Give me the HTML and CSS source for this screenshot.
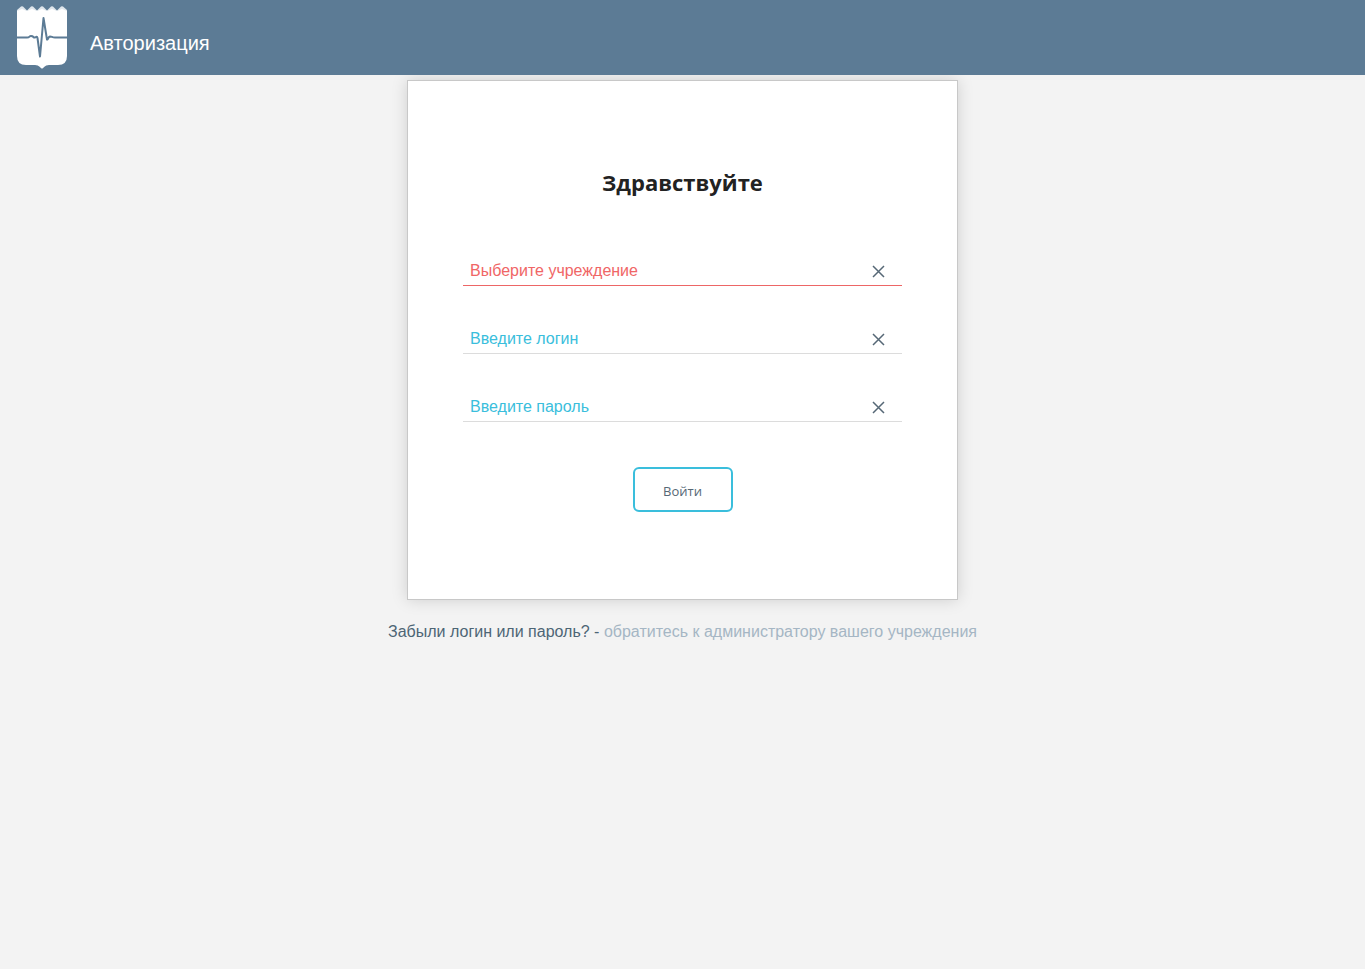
FILE: index.html
```html
<!DOCTYPE html>
<html lang="ru">
<head>
<meta charset="utf-8">
<meta name="viewport" content="width=device-width, initial-scale=1">
<title>Авторизация</title>
<link rel="stylesheet" href="styles.css">
</head>
<body>
<header class="topbar">
  <svg class="logo" width="52" height="65" viewBox="0 0 52 65" aria-hidden="true">
    <path fill="#dfe6ec" d="M1 7V5L5 1.500Q6 .8 7 1.500L11 5.500L15 1.500Q16 .8 17 1.500L21 5.500L25 1.500Q26 .8 27 1.500L31 5.500L35 1.500Q36 .8 37 1.500L41 5.500L45 1.500Q46 .8 47 1.500L51 5V7Z"/>
    <path fill="#fff" d="M1 6L6 4L11 6L16 4L21 6L26 4L31 6L36 4L41 6L46 4L51 6V51Q51 60 42 60H33Q30 60 28 62Q26 65 24 62Q22 60 19 60H10Q1 60 1 51Z"/>
    <path fill="none" stroke="#5c7b95" stroke-width="2" stroke-linejoin="round" d="M1 32.500H11C14 32.500 13 31 15 31C18 31 17 33 19 32.500C20 32 21 31 21.500 33L24 51.500L27.500 13L31 34.500C32 35 32 32 34 31.500C36 31.500 36 32.500 39 32.500H51"/>
  </svg>
  <span class="topbar-title">Авторизация</span>
</header>
<main class="page">
  <form class="card">
    <h1 class="greeting">Здравствуйте</h1>
    <div class="fields">
      <div class="field field-invalid">
        <input class="field-input" type="text" aria-label="Выберите учреждение" placeholder="Выберите учреждение">
        <button class="clear" type="button" aria-label="Очистить учреждение"><svg width="13" height="13" viewBox="0 0 13 13"><path d="M1 1L12 12M12 1L1 12"/></svg></button>
      </div>
      <div class="field">
        <input class="field-input" type="text" aria-label="Введите логин" placeholder="Введите логин">
        <button class="clear" type="button" aria-label="Очистить логин"><svg width="13" height="13" viewBox="0 0 13 13"><path d="M1 1L12 12M12 1L1 12"/></svg></button>
      </div>
      <div class="field">
        <input class="field-input" type="password" aria-label="Введите пароль" placeholder="Введите пароль">
        <button class="clear" type="button" aria-label="Очистить пароль"><svg width="13" height="13" viewBox="0 0 13 13"><path d="M1 1L12 12M12 1L1 12"/></svg></button>
      </div>
    </div>
    <button class="submit" type="submit">Войти</button>
  </form>
  <p class="hint">Забыли логин или пароль? - <span class="hint-muted">обратитесь к администратору вашего учреждения</span></p>
</main>
</body>
</html>
```
FILE: styles.css
```css
* {
  box-sizing: border-box;
}

body {
  margin: 0;
  min-height: 100vh;
  background: #f3f3f3;
  color: #4d6575;
  font: 16px/20px "Liberation Sans", Arial, sans-serif;
}

.topbar {
  position: relative;
  z-index: 1;
  display: flex;
  gap: 22px;
  padding: 5px 16px;
  background: #5c7b95;
  color: #fff;
}

.logo {
  display: block;
}

.topbar-title {
  padding-top: 26px;
  font-size: 20px;
  line-height: 24px;
}

.page {
  display: flex;
  flex-direction: column;
  align-items: center;
  padding: 5px 16px;
}

.card {
  display: flex;
  flex-direction: column;
  align-items: center;
  width: 100%;
  max-width: 551px;
  padding: 85px 55px 87px;
  border: 1px solid #c8c8c8;
  background: #fff;
  box-shadow: 0 0 15px rgba(0, 0, 0, 0.15);
}

.greeting {
  margin: 0;
  color: #222;
  font: bold 22px/32px "Open Sans", sans-serif;
}

.fields {
  display: grid;
  gap: 36px;
  width: 100%;
  margin: 56px 0 45px;
}

.field {
  display: flex;
  align-items: center;
  height: 32px;
  padding: 3px 17px 0 7px;
  border-bottom: 1px solid #dcdcdc;
}

.field-invalid {
  border-color: #ed6666;
}

.field-input {
  flex: 1;
  min-width: 0;
  padding: 0;
  border: 0;
  outline: 0;
  background: none;
  color: #4d6575;
  font: inherit;
}

.field-input::placeholder {
  color: #3abedc;
  opacity: 1;
}

.field-invalid .field-input::placeholder {
  color: #f06666;
}

.clear {
  display: flex;
  padding: 0;
  border: 0;
  background: none;
  cursor: pointer;
}

.clear path {
  fill: none;
  stroke: #566876;
  stroke-width: 1.5;
}

.submit {
  width: 100px;
  height: 45px;
  padding: 2px 0 0;
  border: 2px solid #3abedc;
  border-radius: 6px;
  background: #fff;
  color: #566876;
  font: 13px/16px "Open Sans", sans-serif;
  cursor: pointer;
}

.hint {
  margin: 22px 0 0;
  text-align: center;
}

.hint-muted {
  color: #a5b6c4;
}
```
